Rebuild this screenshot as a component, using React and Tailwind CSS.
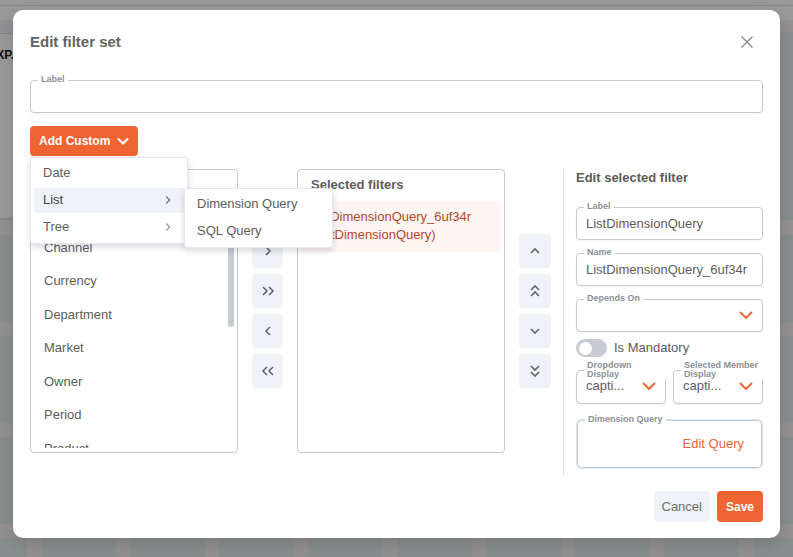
import React from "react";

const icons = {
  right: ["M6 4l4 4-4 4"],
  rightDouble: ["M3 4l4 4-4 4", "M9 4l4 4-4 4"],
  left: ["M10 4L6 8l4 4"],
  leftDouble: ["M7 4L3 8l4 4", "M13 4L9 8l4 4"],
  up: ["M4 10l4-4 4 4"],
  upDouble: ["M4 7l4-4 4 4", "M4 13l4-4 4 4"],
  down: ["M4 6l4 4 4-4"],
  downDouble: ["M4 3l4 4 4-4", "M4 9l4 4 4-4"],
};

function Icon({ name, className, stroke = 1.6 }) {
  return (
    <svg viewBox="0 0 16 16" fill="none" stroke="currentColor" strokeWidth={stroke} className={className} aria-hidden="true">
      {icons[name].map((d) => (
        <path key={d} d={d} />
      ))}
    </svg>
  );
}

function OrangeChevron() {
  return (
    <svg viewBox="0 0 14 8" fill="none" stroke="#ee6533" strokeWidth="1.9" className="pointer-events-none absolute top-3 right-2.5 h-2 w-3.5" aria-hidden="true">
      <path d="M1 1l6 6 6-6" />
    </svg>
  );
}

const fieldLabel = "absolute left-2 -top-1.5 bg-white px-[3px] text-[9px] leading-[10px] font-bold text-[#8d9096]";
const fieldBox = "block w-full rounded-[4px] border border-[#c6cad3] bg-white px-[9px] text-[13px] text-[#5c5c5c] outline-none shadow-xs";

function TextField({ id, label, value }) {
  return (
    <div className="relative">
      <input id={id} defaultValue={value} className={`${fieldBox} h-[33px]`} />
      <label htmlFor={id} className={fieldLabel}>{label}</label>
    </div>
  );
}

function SelectField({ id, label, value }) {
  return (
    <div className="relative">
      <select id={id} className={`${fieldBox} h-[33px] appearance-none`}>
        <option>{value}</option>
      </select>
      <label htmlFor={id} className={fieldLabel}>{label}</label>
      <OrangeChevron />
    </div>
  );
}

function DisplaySelect({ id, label }) {
  return (
    <div className="relative min-w-0 flex-1">
      <select id={id} className={`${fieldBox} h-[34px] appearance-none pb-[3px]`}>
        <option>capti...</option>
      </select>
      <label htmlFor={id} className="absolute right-0 left-2 -top-[9px] bg-white pr-1 pl-[3px] text-[9px] leading-[9px] font-bold text-[#8d9096]">
        {label}
      </label>
      <OrangeChevron />
    </div>
  );
}

function MoveButtons({ items }) {
  return (
    <div className="flex h-71 w-full flex-col justify-center gap-1.5">
      {items.map(([icon, label]) => (
        <button key={icon} type="button" aria-label={label} className="flex h-[34px] items-center justify-center rounded-[4px] bg-[#eff3f7] text-[#62666b]">
          <Icon name={icon} className="h-4 w-4" />
        </button>
      ))}
    </div>
  );
}

function MenuItem({ children, active, arrow }) {
  return (
    <li role="none">
      <button
        type="button"
        role="menuitem"
        className={`flex h-[25px] w-full items-center justify-between pr-[9px] pb-0.5 pl-[9px] text-left text-[13px] ${active ? "rounded-l-[3px] bg-[#eff3f7] text-[#444]" : "text-[#5c5c5c]"}`}
      >
        {children}
        {arrow && <Icon name="right" stroke={1.3} className={`h-3.5 w-3.5 ${active ? "text-[#666a70]" : "text-[#8f949b]"}`} />}
      </button>
    </li>
  );
}

const menuBox = "absolute rounded-[3px] border border-[#e1e6ef] bg-white p-[3px] shadow-[0_3px_6px_rgba(40,50,70,0.18)]";

function AddCustomMenu() {
  return (
    <div className="relative w-fit">
      <button type="button" aria-haspopup="menu" aria-expanded="true" className="flex h-[30px] items-center gap-[3px] rounded-[4px] bg-[#ee6533] pr-[5px] pl-[9px] text-[12px] font-bold text-white">
        Add Custom
        <Icon name="down" stroke={1.7} className="h-5 w-5" />
      </button>
      <div className="absolute top-[31px] left-0 z-20">
        <ul role="menu" className={`${menuBox} top-0 left-0 flex w-[158px] flex-col gap-0.5`}>
          <MenuItem>Date</MenuItem>
          <MenuItem active arrow>List</MenuItem>
          <MenuItem arrow>Tree</MenuItem>
        </ul>
        <ul role="menu" className={`${menuBox} top-[31px] left-[154px] flex w-[149px] flex-col gap-0.5`}>
          <MenuItem>Dimension Query</MenuItem>
          <MenuItem>SQL Query</MenuItem>
        </ul>
      </div>
    </div>
  );
}

function TileRow() {
  return (
    <div className="-ml-12 flex gap-3.5">
      {Array.from({ length: 12 }, (_, i) => (
        <div key={i} className="h-[87px] w-[75px] flex-none bg-[#888d8e]" />
      ))}
    </div>
  );
}

function Backdrop() {
  return (
    <div className="absolute inset-0 overflow-hidden bg-[#939092]" aria-hidden="true">
      <div className="box-content h-[5px] border-b border-[#868b93] bg-[#999]" />
      <div className="h-[14px] bg-[#999]" />
      <div className="flex h-[200px]">
        <div className="flex flex-1 flex-col border-b-2 border-[#838589] bg-[#999]">
          <div className="h-3.5 border-b border-[#828488] bg-[#909194]" />
          <div className="flex w-[14px] justify-end pt-3 text-[12px] font-bold whitespace-nowrap text-[#111]">XP.</div>
        </div>
        <div className="mt-3 w-[38px] bg-[#888d8e]" />
      </div>
      <div className="flex flex-col gap-3.5 pt-[15px]">
        <TileRow />
        <TileRow />
        <TileRow />
        <TileRow />
      </div>
    </div>
  );
}

const available = ["Channel", "Currency", "Department", "Market", "Owner", "Period", "Product"];

export default function App() {
  return (
    <div className="relative min-h-screen overflow-hidden px-[13px] pt-2.5 pb-[19px] font-['Liberation_Sans',Arial,sans-serif] text-[13px] text-[#5c5c5c]">
      <Backdrop />
      <section role="dialog" aria-labelledby="dialog-title" className="relative rounded-[10px] bg-white px-[17px] pt-5 pb-4 shadow-[0_6px_16px_rgba(0,0,0,0.14)]">
        <header className="flex items-center justify-between pr-2.5">
          <h1 id="dialog-title" className="text-[15px] leading-6 font-bold text-[#646464]">Edit filter set</h1>
          <button type="button" aria-label="Close" className="text-[#85898f]">
            <svg viewBox="0 0 12 12" fill="none" stroke="currentColor" strokeWidth="1.4" className="h-3 w-3" aria-hidden="true">
              <path d="M.5.5l11 11M11.5.5l-11 11" />
            </svg>
          </button>
        </header>

        <div className="mt-[26px]">
          <TextField id="set-label" label="Label" value="" />
        </div>

        <div className="mt-[13px]">
          <AddCustomMenu />
        </div>

        <div className="mt-[13px] flex">
          <div className="flex h-71 min-w-0 flex-1 flex-col rounded-[4px] border border-[#c6cad3] pt-[31px] pb-1">
            <div className="flex min-h-0 flex-1 justify-between overflow-hidden">
              <ul aria-label="Filters" className="mt-[30px] grid h-[234px] grid-rows-7 items-center pl-[13px]">
                {available.map((name) => (
                  <li key={name}>{name}</li>
                ))}
              </ul>
              <div className="mr-[3px] h-[126px] w-1.5 rounded-full bg-[#c6cad3]" />
            </div>
          </div>

          <div className="mx-3.5 w-[31px] flex-none">
            <MoveButtons items={[["right", "Add"], ["rightDouble", "Add all"], ["left", "Remove"], ["leftDouble", "Remove all"]]} />
          </div>

          <div className="h-71 min-w-0 flex-1 rounded-[4px] border border-[#c6cad3]">
            <h2 className="h-[31px] pl-[13px] leading-[30px] font-bold">Selected filters</h2>
            <p className="mx-[3px] bg-[#fff5f3] pt-[7px] pr-2 pb-2 pl-[9px] leading-[18px] text-[#b5482a]">
              ListDimensionQuery_6uf34r (ListDimensionQuery)
            </p>
          </div>

          <div className="mr-3 ml-3.5 w-8 flex-none">
            <MoveButtons items={[["up", "Move up"], ["upDouble", "Move to top"], ["down", "Move down"], ["downDouble", "Move to bottom"]]} />
          </div>

          <div className="w-[200px] flex-none border-l border-[#dfe4ee] pb-[7px] pl-3">
            <h2 className="leading-[18px] font-bold">Edit selected filter</h2>
            <div className="mt-5 flex flex-col gap-[13px]">
              <TextField id="filter-label" label="Label" value="ListDimensionQuery" />
              <TextField id="filter-name" label="Name" value="ListDimensionQuery_6uf34r" />
              <SelectField id="depends-on" label="Depends On" value="" />
            </div>
            <div className="mt-[7px] flex items-center gap-[7px] leading-[18px]">
              <input
                id="mandatory"
                type="checkbox"
                role="switch"
                className="flex h-[18px] w-[31px] appearance-none items-center rounded-full bg-[#c6cad3] px-[3px] before:h-[13px] before:w-[13px] before:rounded-full before:bg-white before:content-['']"
              />
              <label htmlFor="mandatory">Is Mandatory</label>
            </div>
            <div className="mt-[13px] flex gap-[7px]">
              <DisplaySelect id="dropdown-display" label="Dropdown Display" />
              <DisplaySelect id="member-display" label="Selected Member Display" />
            </div>
            <div role="group" aria-labelledby="dimension-query" className="relative mt-[15px] rounded-[5px] border border-[#dfe7f1]">
              <div className="flex h-12 items-center justify-end rounded-[4px] border border-[#c6cad3] pr-[17px]">
                <button type="button" className="text-[#ee6533]">Edit Query</button>
              </div>
              <span id="dimension-query" className={fieldLabel}>Dimension Query</span>
            </div>
          </div>
        </div>

        <footer className="mt-[15px] flex justify-end gap-[7px]">
          <button type="button" className="h-[31px] rounded-[4px] bg-[#eff3f7] px-2 text-[#6b6f74]">Cancel</button>
          <button type="button" className="h-[31px] rounded-[4px] bg-[#ee6533] px-[9px] text-[12px] font-bold text-white">Save</button>
        </footer>
      </section>
    </div>
  );
}
